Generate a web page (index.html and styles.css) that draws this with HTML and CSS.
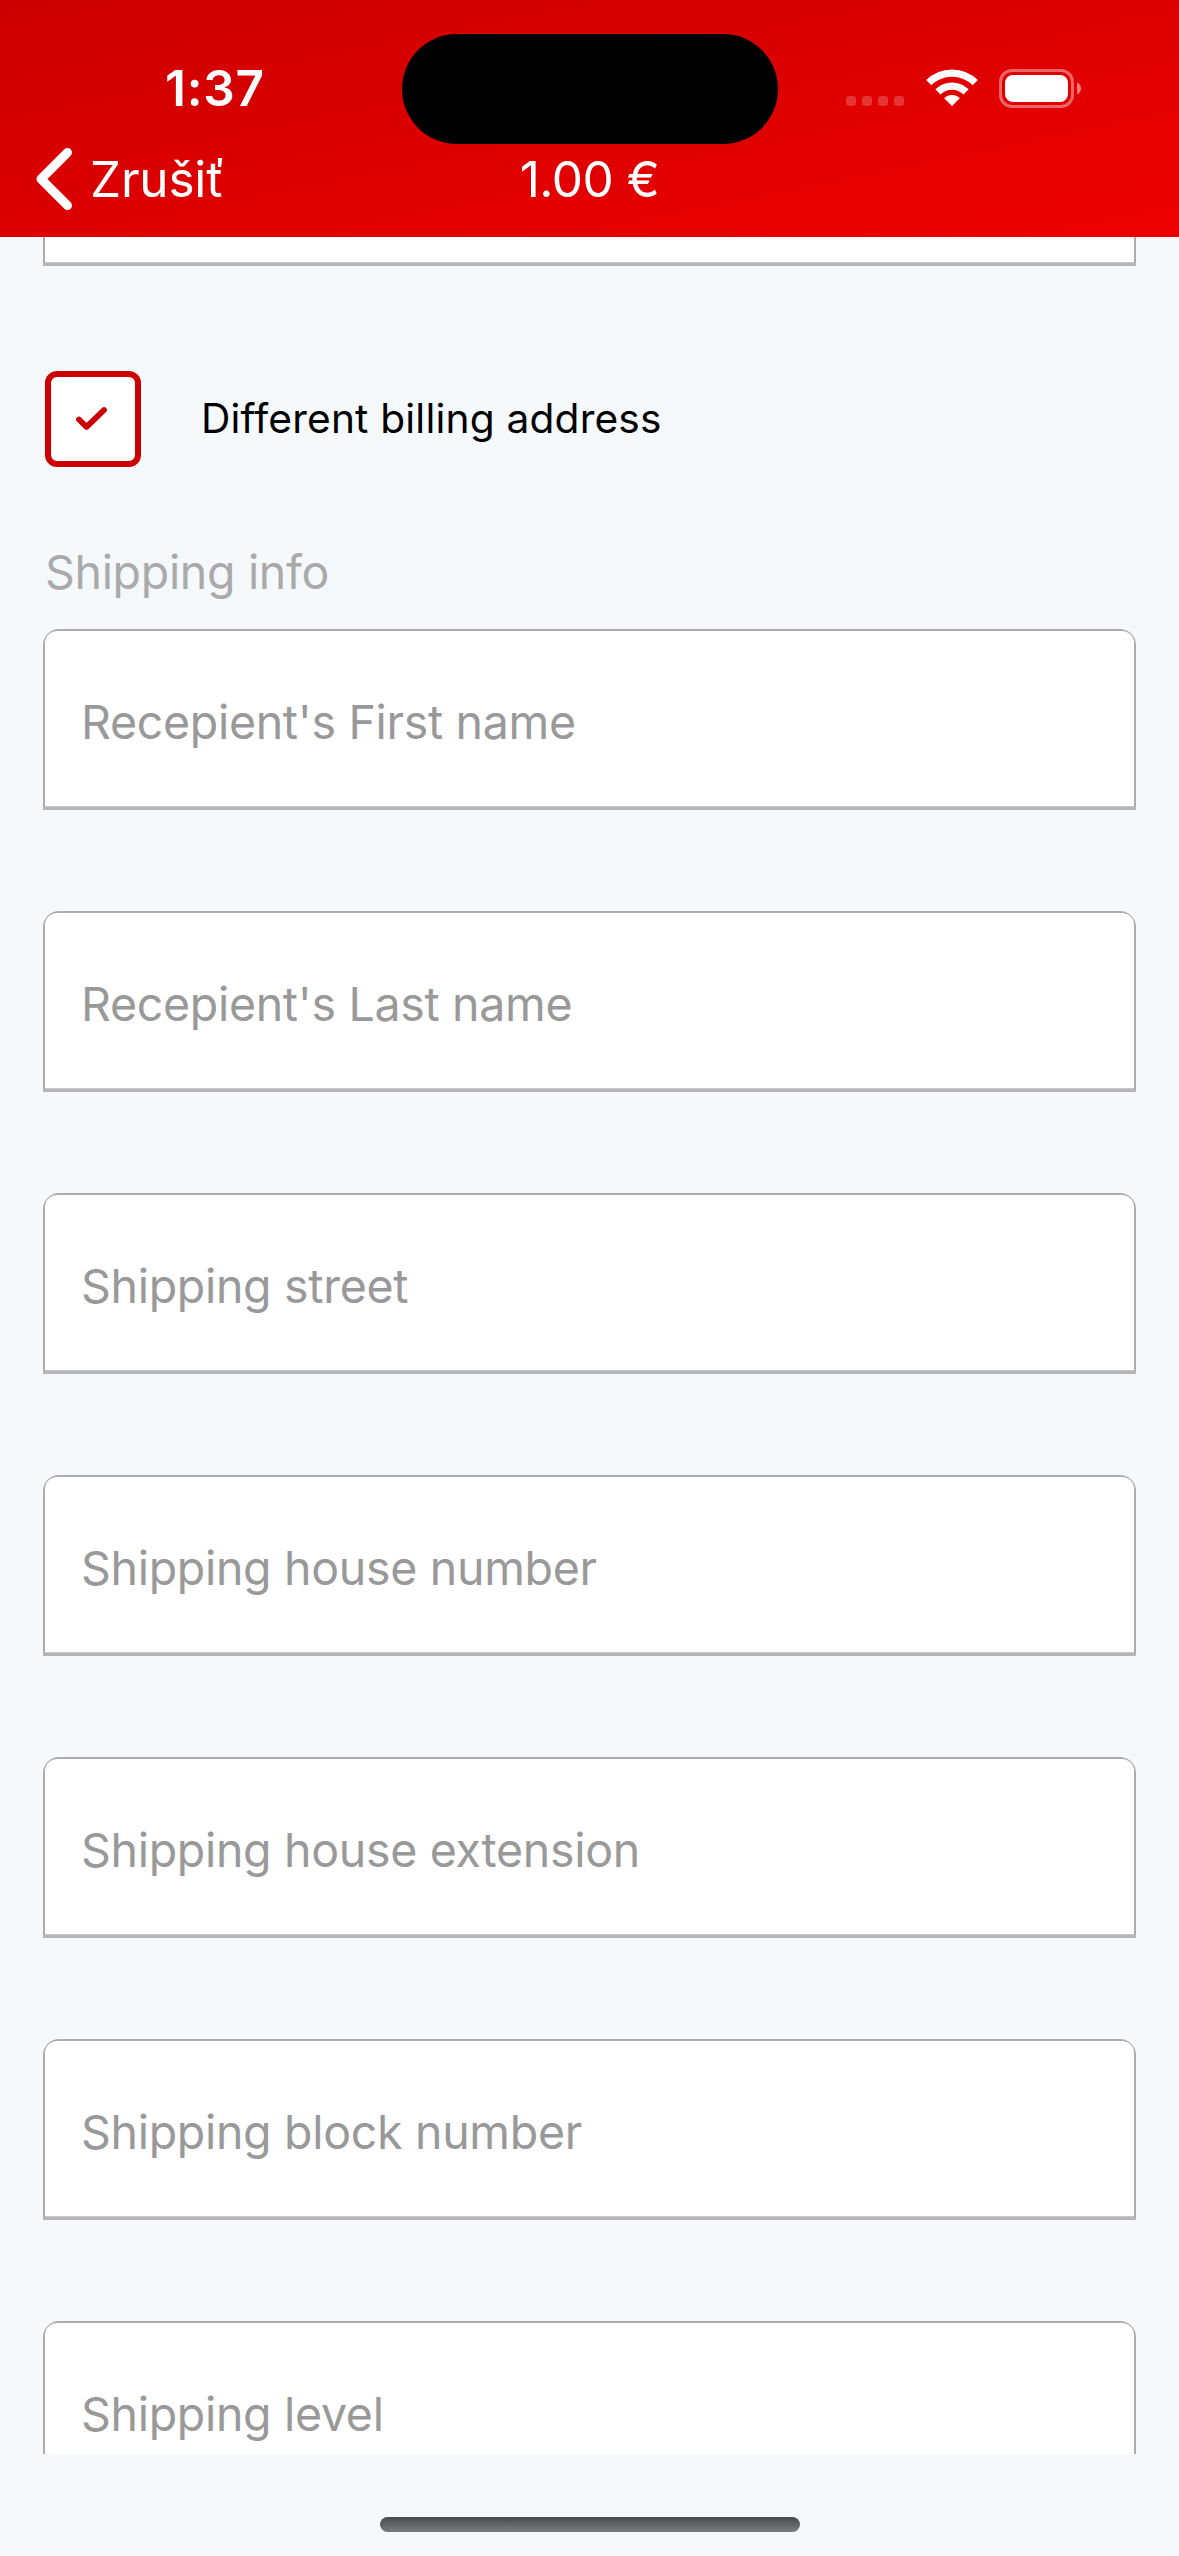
FILE: index.html
```html
<!DOCTYPE html>
<html lang="sk">
<head>
<meta charset="utf-8">
<title>1.00 €</title>
<link rel="stylesheet" href="styles.css">
</head>
<body>
<header class="header">
  <div class="status">
    <span class="time">1:37</span>
    <div class="island"></div>
    <div class="indicators">
      <div class="signal"><i></i><i></i><i></i><i></i></div>
      <svg class="wifi" width="52" height="38" viewBox="0 0 52 38">
        <g fill="none" stroke="#fff" stroke-width="7.3">
          <path d="M2.7 13.7A33 33 0 0 1 49.3 13.7"/>
          <path d="M11.9 22.9A20 20 0 0 1 40.1 22.9"/>
        </g>
        <path d="M26 37 18.2 29.2A11.1 11.1 0 0 1 33.8 29.2Z" fill="#fff"/>
      </svg>
      <svg class="battery" width="82" height="39" viewBox="0 0 82 39">
        <rect x="1.5" y="1.5" width="72" height="36" rx="11.5" fill="none" stroke="#fff" stroke-opacity=".4" stroke-width="3"/>
        <rect x="6" y="6" width="63" height="27" rx="8" fill="#fff"/>
        <path d="M78 13.5C80.7 14.7 82 17 82 19.5S80.7 24.3 78 25.5Z" fill="#fff" fill-opacity=".5"/>
      </svg>
    </div>
  </div>
  <nav class="nav">
    <a class="back">
      <svg class="chevron" width="38" height="64" viewBox="0 0 38 64">
        <path d="M32.5 5.5 6 32 32.5 58.5" fill="none" stroke="#fff" stroke-width="9" stroke-linecap="round" stroke-linejoin="round"/>
      </svg>
      <span class="back-label">Zrušiť</span>
    </a>
    <span class="title">1.00 €</span>
  </nav>
</header>
<main class="content">
  <div class="field field-scrolled"><div class="field-box"></div></div>
  <div class="option">
    <div class="checkbox">
      <svg width="36" height="28" viewBox="0 0 36 28">
        <path d="M4 14.5 11.6 21.8 29 5" fill="none" stroke="#c00" stroke-width="5.8" stroke-linecap="round" stroke-linejoin="round"/>
      </svg>
    </div>
    <span class="option-label">Different billing address</span>
  </div>
  <h2 class="section">Shipping info</h2>
  <div class="fields">
    <div class="field"><div class="field-box">Recepient's First name</div></div>
    <div class="field"><div class="field-box">Recepient's Last name</div></div>
    <div class="field"><div class="field-box">Shipping street</div></div>
    <div class="field"><div class="field-box">Shipping house number</div></div>
    <div class="field"><div class="field-box">Shipping house extension</div></div>
    <div class="field"><div class="field-box">Shipping block number</div></div>
    <div class="field"><div class="field-box">Shipping level</div></div>
  </div>
</main>
<footer class="footer"><div class="home"></div></footer>
</body>
</html>
```
FILE: styles.css
```css
* { box-sizing: border-box; }

body {
  margin: 0;
  width: 1179px;
  height: 2556px;
  overflow: hidden;
  background: #f5f9fc;
  font-family: Inter, "Liberation Sans", sans-serif;
  white-space: nowrap;
}

.header {
  height: 237px;
  padding-top: 32px;
  background: linear-gradient(to bottom right, #c00, #e00);
  color: #fff;
}

.status {
  display: grid;
  grid-template-columns: 401.5px 376px 1fr;
  align-items: center;
  height: 112px;
}

.time {
  padding-left: 165px;
  font-size: 49.5px;
  font-weight: 600;
  letter-spacing: .8px;
}

.island {
  align-self: end;
  height: 110.5px;
  border-radius: 56px;
  background: #000;
}

.indicators {
  display: flex;
  align-items: center;
  padding-left: 68.5px;
}

.signal {
  display: flex;
  gap: 6px;
  margin-top: 26px;
}

.signal i {
  width: 10px;
  height: 10px;
  border-radius: 3px;
  background: rgba(255, 255, 255, .2);
}

.wifi { margin-left: 21.5px; }
.battery { margin-left: 21.5px; }

.nav {
  display: grid;
  grid-template-columns: 1fr auto 1fr;
  align-items: center;
  height: 70px;
  font-size: 49.5px;
}

.back {
  display: flex;
  align-items: center;
  padding-left: 35px;
}

.back-label {
  margin-left: 17px;
  letter-spacing: -.2px;
}

.title { letter-spacing: -.5px; }

.content {
  height: 2217px;
  padding: 0 43px;
  overflow: hidden;
}

.field {
  height: 181px;
  padding: 2px 2px 0;
  border-bottom: 3px solid #b6b6b6;
  border-radius: 16px 16px 0 0;
  background: #acacac;
}

.field-box {
  display: flex;
  align-items: center;
  height: 176px;
  padding: 6px 36px 0;
  border-bottom: 1px solid #c8c8c8;
  border-radius: 12px 12px 0 0;
  background: #fff;
  color: #999;
  font-size: 46.5px;
  letter-spacing: -.31px;
}

.field-scrolled { margin-top: -152px; }

.option {
  display: flex;
  align-items: center;
  height: 96px;
  margin: 105px 0 0 2px;
}

.checkbox {
  display: flex;
  align-items: center;
  justify-content: center;
  width: 96px;
  height: 96px;
  border: 6px solid #c00;
  border-radius: 12px;
  background: #fff;
}

.option-label {
  margin-left: 60px;
  padding-bottom: 2px;
  font-size: 40.7px;
  letter-spacing: .18px;
}

.section {
  height: 60px;
  margin: 75px 0 27px 2px;
  color: #aaa;
  font-size: 46.5px;
  font-weight: 400;
  letter-spacing: -.33px;
  line-height: 60px;
}

.fields {
  display: grid;
  gap: 101px;
}

.footer {
  display: flex;
  justify-content: center;
  height: 102px;
  padding-top: 63px;
}

.home {
  width: 420px;
  height: 15px;
  border-radius: 8px;
  background: linear-gradient(#47494b, #7b7d7e);
}
```
